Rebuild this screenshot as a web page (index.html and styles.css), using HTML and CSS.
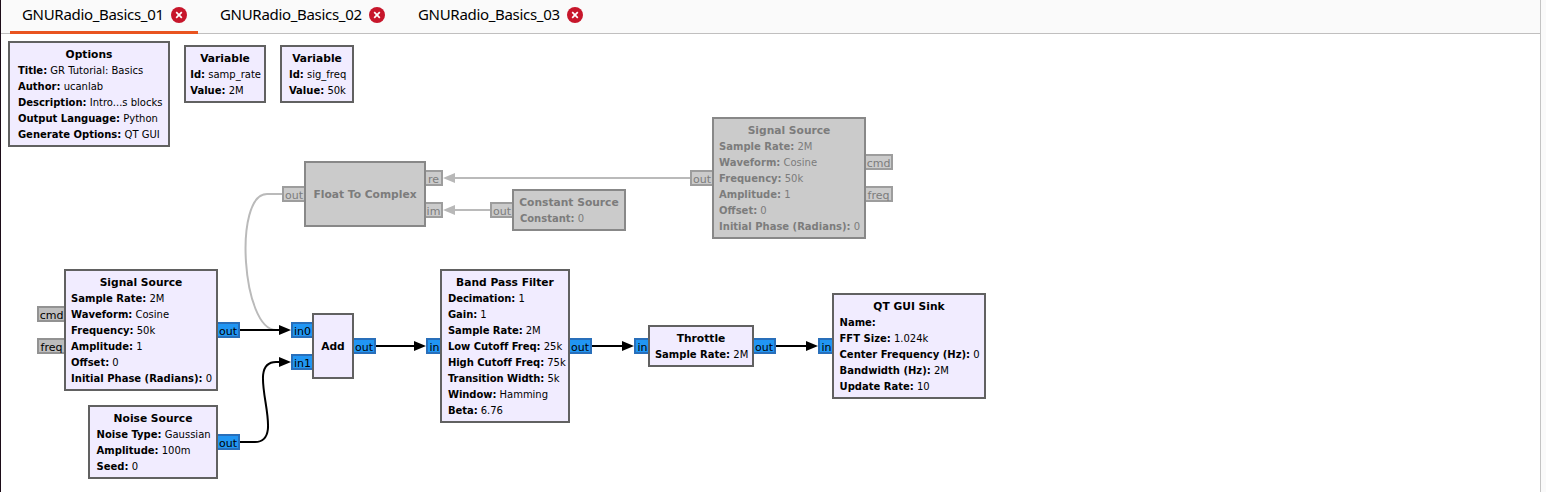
FILE: index.html
```html
<!DOCTYPE html>
<html lang="en">
<head>
<meta charset="utf-8">
<title>GNU Radio Companion</title>
<link rel="stylesheet" href="styles.css">
</head>
<body>
<div class="window">
  <nav class="tabs">
    <div class="tab active"><span class="name">GNURadio_Basics_01</span><svg class="close" viewBox="0 0 16 16"><circle cx="8" cy="8" r="8"/><path d="M5.2 5.2l5.6 5.6M10.8 5.2l-5.6 5.6"/></svg></div>
    <div class="tab"><span class="name">GNURadio_Basics_02</span><svg class="close" viewBox="0 0 16 16"><circle cx="8" cy="8" r="8"/><path d="M5.2 5.2l5.6 5.6M10.8 5.2l-5.6 5.6"/></svg></div>
    <div class="tab"><span class="name">GNURadio_Basics_03</span><svg class="close" viewBox="0 0 16 16"><circle cx="8" cy="8" r="8"/><path d="M5.2 5.2l5.6 5.6M10.8 5.2l-5.6 5.6"/></svg></div>
  </nav>
  <main class="canvas">
    <svg class="wires" viewBox="0 34 1540 458">
      <g class="wire off">
        <path d="M282 194H267C233 194 242 330 276 330"/>
        <path d="M690 178H454"/><path d="M490 210H454"/>
        <path class="head" d="M443 178l12-5v10zM443 210l12-5v10z"/>
      </g>
      <g class="wire">
        <path d="M240 330H280"/><path d="M240 442H255C289 442 242 362 276 362H280"/>
        <path d="M376 346H415"/><path d="M592 346H623"/><path d="M776 346H807"/>
        <path class="head" d="M291 330l-12-5v10zM291 362l-12-5v10zM426 346l-12-5v10zM634 346l-12-5v10zM818 346l-12-5v10z"/>
      </g>
    </svg>

    <section class="block options"><div class="body"><h2>Options</h2><p><b>Title:</b> GR Tutorial: Basics</p><p><b>Author:</b> ucanlab</p><p><b>Description:</b> Intro...s blocks</p><p><b>Output Language:</b> Python</p><p><b>Generate Options:</b> QT GUI</p></div></section>
    <section class="block samp-rate"><div class="body"><h2>Variable</h2><p><b>Id:</b> samp_rate</p><p><b>Value:</b> 2M</p></div></section>
    <section class="block sig-freq"><div class="body"><h2>Variable</h2><p><b>Id:</b> sig_freq</p><p><b>Value:</b> 50k</p></div></section>

    <section class="block disabled float"><div class="body"><h2>Float To Complex</h2></div>
      <span class="port left p23">out</span><span class="port right p7 narrow">re</span><span class="port right p39 narrow">im</span></section>
    <section class="block disabled constant"><div class="body"><h2>Constant Source</h2><p><b>Constant:</b> 0</p></div>
      <span class="port left p11">out</span></section>
    <section class="block disabled signal-off"><div class="body"><h2>Signal Source</h2><p><b>Sample Rate:</b> 2M</p><p><b>Waveform:</b> Cosine</p><p><b>Frequency:</b> 50k</p><p><b>Amplitude:</b> 1</p><p><b>Offset:</b> 0</p><p><b>Initial Phase (Radians):</b> 0</p></div>
      <span class="port left p51">out</span><span class="port right p35 wide">cmd</span><span class="port right p67 wide">freq</span></section>

    <section class="block signal"><div class="body"><h2>Signal Source</h2><p><b>Sample Rate:</b> 2M</p><p><b>Waveform:</b> Cosine</p><p><b>Frequency:</b> 50k</p><p><b>Amplitude:</b> 1</p><p><b>Offset:</b> 0</p><p><b>Initial Phase (Radians):</b> 0</p></div>
      <span class="port message left p35 wide">cmd</span><span class="port message left p67 wide">freq</span><span class="port right p51">out</span></section>
    <section class="block noise"><div class="body"><h2>Noise Source</h2><p><b>Noise Type:</b> Gaussian</p><p><b>Amplitude:</b> 100m</p><p><b>Seed:</b> 0</p></div>
      <span class="port right p27">out</span></section>
    <section class="block add"><div class="body"><h2>Add</h2></div>
      <span class="port left p7 index">in0</span><span class="port left p39 index">in1</span><span class="port right p23">out</span></section>
    <section class="block filter"><div class="body"><h2>Band Pass Filter</h2><p><b>Decimation:</b> 1</p><p><b>Gain:</b> 1</p><p><b>Sample Rate:</b> 2M</p><p><b>Low Cutoff Freq:</b> 25k</p><p><b>High Cutoff Freq:</b> 75k</p><p><b>Transition Width:</b> 5k</p><p><b>Window:</b> Hamming</p><p><b>Beta:</b> 6.76</p></div>
      <span class="port left p67 in">in</span><span class="port right p67">out</span></section>
    <section class="block throttle"><div class="body"><h2>Throttle</h2><p><b>Sample Rate:</b> 2M</p></div>
      <span class="port left p11 in">in</span><span class="port right p11">out</span></section>
    <section class="block sink"><div class="body"><h2>QT GUI Sink</h2><p><b>Name:</b></p><p><b>FFT Size:</b> 1.024k</p><p><b>Center Frequency (Hz):</b> 0</p><p><b>Bandwidth (Hz):</b> 2M</p><p><b>Update Rate:</b> 10</p></div>
      <span class="port left p43 in">in</span></section>
  </main>
</div>
</body>
</html>
```
FILE: styles.css
```css
* { box-sizing: border-box; }
body { margin: 0; background: #fafafa; font-family: "DejaVu Sans", sans-serif; color: #000; overflow: hidden; }
.window { width: 1541px; height: 492px; display: flex; flex-direction: column; border-left: 1px solid #1c0c18; border-right: 1px solid #c4c4c4; }

.tabs { display: flex; gap: 10px; height: 34px; padding-left: 9px; background: #fafafa; border-bottom: 1px solid #c0bfbf; flex: none; }
.tab { display: flex; align-items: center; gap: 8px; width: 188px; height: 34px; padding: 0 0 4px 12px; font: 15px/20px "Noto Sans", sans-serif; }
.tab.active { border-bottom: 3px solid #e95420; padding-bottom: 1px; }
.name { width: 141px; white-space: nowrap; letter-spacing: -0.31px; margin-top: -2px; }
.close { width: 16px; height: 16px; flex: none; }
.close circle { fill: #c7162b; }
.close path { stroke: #fff; stroke-width: 1.7; fill: none; }

.canvas { position: relative; flex: 1; margin-left: -1px; border-left: 1px solid #1c0c18; background: #fff; }
.wires { position: absolute; left: -1px; top: 0; width: 1540px; height: 458px; }
.wire path { fill: none; stroke: #000; stroke-width: 2; }
.wire .head { fill: #000; stroke: none; }
.wire.off path { stroke: #bababa; }
.wire.off .head { fill: #b8b8b8; stroke: none; }

/* flowgraph blocks, placed freely on the canvas */
.block { position: absolute; display: flex; justify-content: center; align-items: center; background: #f1ecff; border: 2px solid #616161; }
.body { flex: none; white-space: nowrap; padding-top: 2px; }
h2 { margin: 0; font-size: 10.7px; line-height: 16px; font-weight: bold; text-align: center; }
p { margin: 0 -0.6px 0 0.6px; height: 16px; font-size: 10px; line-height: 16px; }
.disabled { background: #cbcbcb; border-color: #888; color: #7c7c7c; }

.options { left: 7px; top: 7px; width: 162px; height: 106px; }
.options p { margin: 0 -1.2px 0 1.2px; }
.samp-rate { left: 183px; top: 11px; width: 82px; height: 58px; }
.sig-freq { left: 279px; top: 11px; width: 74px; height: 58px; }
.float { left: 303px; top: 127px; width: 122px; height: 66px; }
.constant { left: 511px; top: 155px; width: 114px; height: 42px; }
.signal-off { left: 711px; top: 83px; width: 154px; height: 122px; }
.signal { left: 63px; top: 235px; width: 154px; height: 122px; }
.noise { left: 87px; top: 371px; width: 130px; height: 74px; }
.add { left: 311px; top: 279px; width: 42px; height: 66px; }
.filter { left: 439px; top: 235px; width: 130px; height: 154px; }
.filter p { margin: 0 -1.8px 0 1.8px; letter-spacing: -0.04px; }
.throttle { left: 647px; top: 291px; width: 106px; height: 42px; }
.sink { left: 831px; top: 259px; width: 154px; height: 106px; }

/* ports sit on the outside edge of their block */
.port { position: absolute; width: 22px; height: 16px; font-size: 11px; line-height: 15px; text-align: center; background: #2196f3; border: 2px solid #296fba; white-space: nowrap; display: flex; justify-content: center; }
.left { right: 100%; margin-right: 2px; border-right: 0; }
.right { left: 100%; margin-left: 2px; border-left: 0; }
.wide { width: 27px; }
.narrow { width: 17px; }
.index { width: 21px; }
.in { width: 14px; padding-left: 1px; }
.message { background: #bdbdbd; border-color: #929292; }
.disabled .port { background: #cbcbcb; border-color: #9d9d9d; }
.p7 { top: 7px; }
.p11 { top: 11px; }
.p23 { top: 23px; }
.p27 { top: 27px; }
.p35 { top: 35px; }
.p39 { top: 39px; }
.p43 { top: 43px; }
.p51 { top: 51px; }
.p67 { top: 67px; }
```
